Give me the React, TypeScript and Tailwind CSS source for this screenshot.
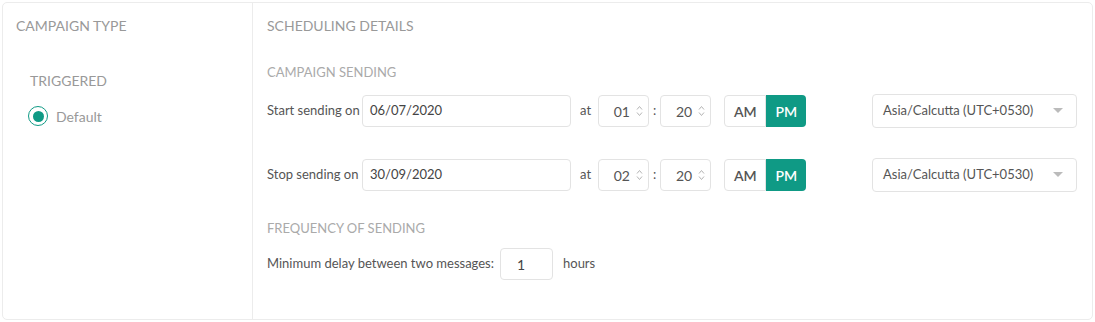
import React from "react";

const TEAL = "bg-[#0f9a85]";

function Spinner() {
  return (
    <svg width="7" height="14" viewBox="0 0 7 14" className="shrink-0">
      <path d="M1 5.5 L3.5 2.5 L6 5.5" fill="none" stroke="#b5b5b5" strokeWidth="1" />
      <path d="M1 8.5 L3.5 11.5 L6 8.5" fill="none" stroke="#b5b5b5" strokeWidth="1" />
    </svg>
  );
}

function TimeBox({ value }: { value: string }) {
  return (
    <div className="flex h-[32px] w-[51px] items-center justify-end gap-[6px] rounded-[4px] border border-[#e3e3e3] pr-[5px] text-[14px] text-[#555]">
      <span>{value}</span>
      <Spinner />
    </div>
  );
}

function SendRow({ label, date, hour }: { label: string; date: string; hour: string }) {
  return (
    <div className="flex h-[32px] items-center text-[13px] text-[#555]">
      <span className="w-[95px]">{label}</span>
      <div className="flex h-[32px] w-[209px] items-center rounded-[4px] border border-[#e3e3e3] pl-[7px] text-[13px] text-[#444]">
        {date}
      </div>
      <span className="ml-[9px] w-[18px]">at</span>
      <TimeBox value={hour} />
      <span className="mx-[4px]">:</span>
      <TimeBox value="20" />
      <div className="ml-[13px] flex h-[32px] text-[14px] font-semibold">
        <div className="flex w-[42px] items-center justify-center rounded-l-[4px] border border-[#e3e3e3] text-[#555]">AM</div>
        <div className={`flex w-[40px] items-center justify-center rounded-r-[4px] ${TEAL} text-white`}>PM</div>
      </div>
      <div className="ml-auto flex h-[34px] w-[205px] items-center justify-between rounded-[4px] border border-[#e3e3e3] pl-[10px] pr-[13px] text-[13px] text-[#555]">
        <span>Asia/Calcutta (UTC+0530)</span>
        <svg width="10" height="6" viewBox="0 0 10 6">
          <path d="M0 0 L10 0 L5 5 Z" fill="#bbb" />
        </svg>
      </div>
    </div>
  );
}

export default function App() {
  return (
    <div className="h-[322px] w-[1095px] bg-white p-[2px]" style={{ fontFamily: "Lato, 'Open Sans', sans-serif" }}>
      <div className="flex h-[318px] rounded-[5px] border border-[#ececec]">
        <div className="w-[250px] border-r border-[#ececec] pl-[13px] pt-[13px]">
          <div className="h-[20px] text-[14px] leading-[20px] text-[#999]">CAMPAIGN TYPE</div>
          <div className="ml-[14px] mt-[35px] h-[20px] text-[14px] leading-[20px] text-[#999]">TRIGGERED</div>
          <div className="ml-[12px] mt-[15px] flex h-[20px] items-center">
            <div className="flex h-[20px] w-[20px] items-center justify-center rounded-full border-[1.5px] border-[#0f9a85]">
              <div className={`h-[11px] w-[11px] rounded-full ${TEAL}`} />
            </div>
            <span className="ml-[8px] text-[14px] text-[#999]">Default</span>
          </div>
        </div>
        <div className="flex-1 pl-[14px] pr-[15px] pt-[13px]">
          <div className="h-[20px] text-[14px] leading-[20px] text-[#999]">SCHEDULING DETAILS</div>
          <div className="mt-[26px] h-[20px] text-[13px] leading-[20px] text-[#aaa]">CAMPAIGN SENDING</div>
          <div className="mt-[13px]">
            <SendRow label="Start sending on" date="06/07/2020" hour="01" />
          </div>
          <div className="mt-[32px]">
            <SendRow label="Stop sending on" date="30/09/2020" hour="02" />
          </div>
          <div className="mt-[27px] h-[20px] text-[13px] leading-[20px] text-[#aaa]">FREQUENCY OF SENDING</div>
          <div className="mt-[10px] flex h-[32px] items-center text-[13px] text-[#555]">
            <span>Minimum delay between two messages:</span>
            <div className="ml-[6px] flex h-[32px] w-[53px] items-center rounded-[4px] border border-[#e3e3e3] pl-[16px] text-[14px] text-[#444]">
              1
            </div>
            <span className="ml-[10px]">hours</span>
          </div>
        </div>
      </div>
    </div>
  );
}
